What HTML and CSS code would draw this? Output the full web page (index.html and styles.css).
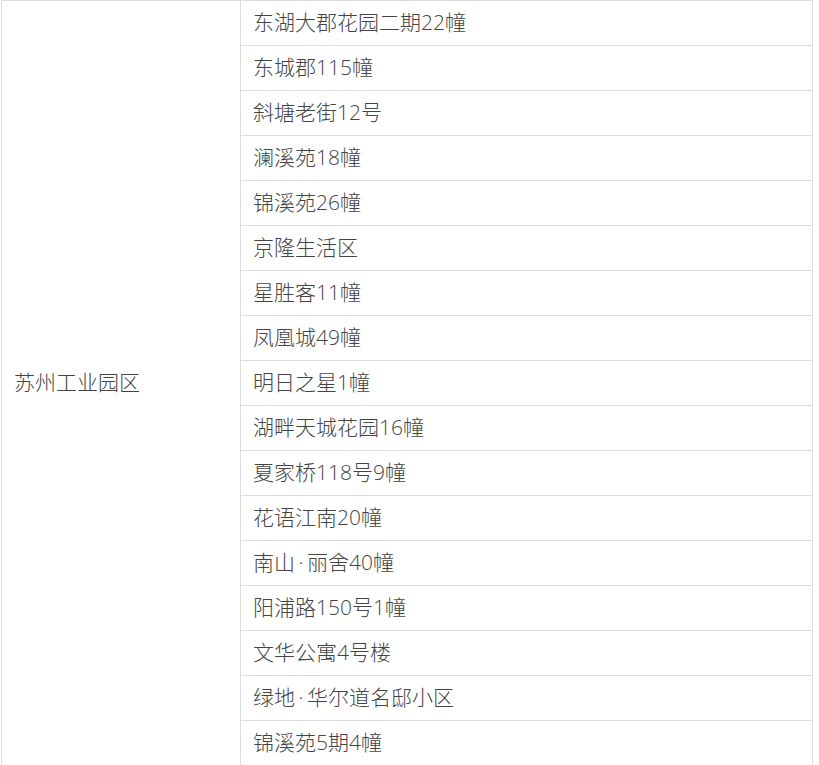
FILE: index.html
```html
<!DOCTYPE html>
<html lang="zh-CN">
<head>
<meta charset="utf-8">
<title>苏州工业园区</title>
<link rel="stylesheet" href="styles.css">
</head>
<body>
<div class="wrap">
<table class="list">
<tbody>
<tr><td class="area" rowspan="17">苏州工业园区</td><td class="item">东湖大郡花园二期22幢</td></tr>
<tr><td class="item">东城郡115幢</td></tr>
<tr><td class="item">斜塘老街12号</td></tr>
<tr><td class="item">澜溪苑18幢</td></tr>
<tr><td class="item">锦溪苑26幢</td></tr>
<tr><td class="item">京隆生活区</td></tr>
<tr><td class="item">星胜客11幢</td></tr>
<tr><td class="item">凤凰城49幢</td></tr>
<tr><td class="item">明日之星1幢</td></tr>
<tr><td class="item">湖畔天城花园16幢</td></tr>
<tr><td class="item">夏家桥118号9幢</td></tr>
<tr><td class="item">花语江南20幢</td></tr>
<tr><td class="item">南山<span class="dot">·</span>丽舍40幢</td></tr>
<tr><td class="item">阳浦路150号1幢</td></tr>
<tr><td class="item">文华公寓4号楼</td></tr>
<tr><td class="item">绿地<span class="dot">·</span>华尔道名邸小区</td></tr>
<tr><td class="item">锦溪苑5期4幢</td></tr>
</tbody>
</table>
</div>
</body>
</html>
```
FILE: styles.css
```css
html, body {
  margin: 0;
  padding: 0;
  background: #fff;
}
.wrap {
  padding-left: 1px;
}
.list {
  border-collapse: collapse;
  width: 812px;
  table-layout: fixed;
  font-family: "Open Sans", "Noto Sans CJK SC", sans-serif;
  font-size: 21px;
  font-weight: 300;
  color: #444;
}
.list td {
  border: 1px solid #dcdcdc;
  padding: 0 12px;
  height: 44px;
  box-sizing: border-box;
  vertical-align: middle;
  line-height: 1.2;
}
.list .item {
  height: 45px;
}
.list .area {
  width: 239px;
}
.dot {
  padding: 0 3.5px;
}
```
